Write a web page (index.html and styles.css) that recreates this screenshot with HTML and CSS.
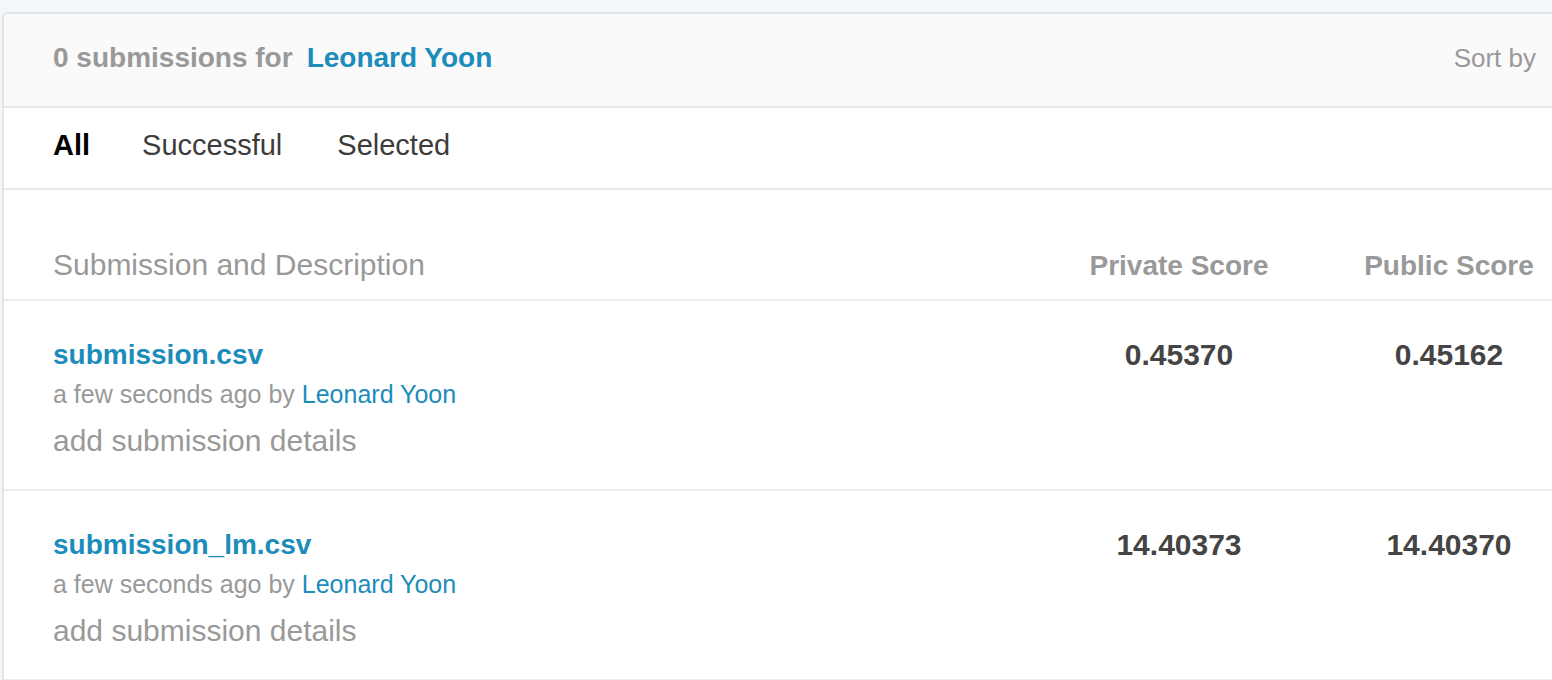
FILE: index.html
```html
<!DOCTYPE html>
<html lang="en">
<head>
<meta charset="utf-8">
<title>Submissions</title>
<link rel="stylesheet" href="styles.css">
</head>
<body>
<div class="card">
  <div class="card-header">
    <div class="title">
      <span class="count">0 submissions for</span>
      <a class="user" href="#">Leonard Yoon</a>
    </div>
    <div class="sort">Sort by</div>
  </div>
  <div class="tabs">
    <span class="tab active">All</span>
    <span class="tab">Successful</span>
    <span class="tab">Selected</span>
  </div>
  <div class="table">
    <div class="row head">
      <div class="col-desc">Submission and Description</div>
      <div class="col-score">Private Score</div>
      <div class="col-score">Public Score</div>
    </div>
    <div class="row item">
      <div class="col-desc">
        <a class="file" href="#">submission.csv</a>
        <div class="meta">a few seconds ago by <a href="#">Leonard Yoon</a></div>
        <div class="details">add submission details</div>
      </div>
      <div class="col-score num">0.45370</div>
      <div class="col-score num">0.45162</div>
    </div>
    <div class="row item">
      <div class="col-desc">
        <a class="file" href="#">submission_lm.csv</a>
        <div class="meta">a few seconds ago by <a href="#">Leonard Yoon</a></div>
        <div class="details">add submission details</div>
      </div>
      <div class="col-score num">14.40373</div>
      <div class="col-score num">14.40370</div>
    </div>
  </div>
</div>
</body>
</html>
```

FILE: styles.css
```css
html, body {
  margin: 0;
  height: 100%;
  overflow: hidden;
}
body {
  background: #f4f7f9;
  padding: 12px 0 0 2px;
  font-family: "Liberation Sans", Arial, sans-serif;
  color: #999;
}
a {
  text-decoration: none;
  color: #1c8cba;
}
.card {
  width: 1600px;
  background: #fff;
  border: 2px solid #e2e4e6;
  border-radius: 6px 6px 0 0;
  box-sizing: border-box;
}
.card-header {
  display: flex;
  justify-content: space-between;
  align-items: baseline;
  background: #fafafa;
  padding: 30px 64px 34px 49px;
  border-bottom: 2px solid #e6e7e8;
  border-radius: 6px 6px 0 0;
}
.title {
  display: flex;
  align-items: baseline;
  gap: 14px;
  font-size: 28px;
  line-height: 28px;
  font-weight: bold;
}
.count {
  color: #999;
}
.sort {
  font-size: 26px;
  line-height: 28px;
  color: #999;
}
.tabs {
  display: flex;
  gap: 55px;
  padding: 23px 49px 28px 49px;
  border-bottom: 2px solid #e6e7e8;
  font-size: 29px;
  line-height: 29px;
}
.tab {
  color: #3c3c3c;
}
.tab.active {
  color: #000;
  font-weight: bold;
  margin-right: -3px;
}
.row {
  display: flex;
  padding: 0 16px 0 49px;
  border-bottom: 2px solid #ececec;
}
.col-desc {
  flex: 1;
}
.col-score {
  width: 270px;
  text-align: center;
}
.head {
  align-items: baseline;
  padding-top: 60px;
  padding-bottom: 18px;
  font-size: 30px;
  line-height: 30px;
}
.head .col-score {
  font-size: 28px;
  font-weight: bold;
}
.item {
  height: 190px;
  padding-top: 40px;
  box-sizing: border-box;
}
.file {
  display: block;
  font-size: 28px;
  line-height: 28px;
  font-weight: bold;
}
.meta {
  margin-top: 10px;
  font-size: 25px;
  line-height: 30px;
  color: #999;
}
.details {
  margin-top: 14px;
  font-size: 30px;
  line-height: 36px;
  color: #999;
}
.num {
  font-size: 30px;
  line-height: 28px;
  font-weight: bold;
  color: #444;
}
```
